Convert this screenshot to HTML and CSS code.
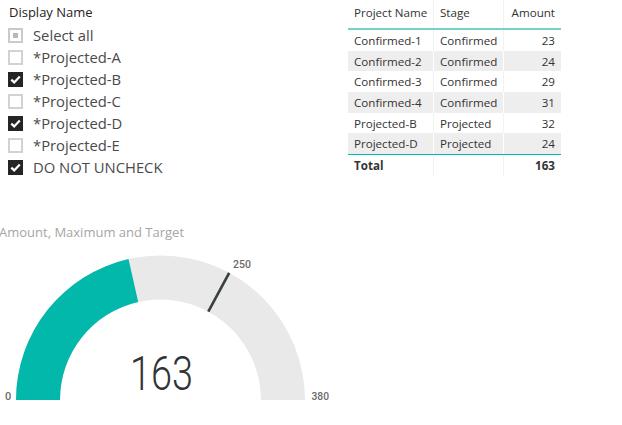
FILE: index.html
```html
<!DOCTYPE html>
<html>
<head>
<meta charset="utf-8">
<link rel="stylesheet" href="styles.css">
</head>
<body>
<div class="page">
  <div class="top">
    <div class="slicer">
      <div class="slicer-title">Display Name</div>
      <div class="item"><span class="box box-partial"><span class="dot"></span></span><span class="label">Select all</span></div>
      <div class="item"><span class="box"></span><span class="label">*Projected-A</span></div>
      <div class="item"><span class="box box-checked"><svg viewBox="0 0 15 15" width="15" height="15"><path d="M3.3 7.6 L6.2 10.4 L11.8 4.4" fill="none" stroke="#fff" stroke-width="2.2"/></svg></span><span class="label">*Projected-B</span></div>
      <div class="item"><span class="box"></span><span class="label">*Projected-C</span></div>
      <div class="item"><span class="box box-checked"><svg viewBox="0 0 15 15" width="15" height="15"><path d="M3.3 7.6 L6.2 10.4 L11.8 4.4" fill="none" stroke="#fff" stroke-width="2.2"/></svg></span><span class="label">*Projected-D</span></div>
      <div class="item"><span class="box"></span><span class="label">*Projected-E</span></div>
      <div class="item"><span class="box box-checked"><svg viewBox="0 0 15 15" width="15" height="15"><path d="M3.3 7.6 L6.2 10.4 L11.8 4.4" fill="none" stroke="#fff" stroke-width="2.2"/></svg></span><span class="label">DO NOT UNCHECK</span></div>
    </div>
    <div class="table">
      <div class="row head">
        <div class="cell c1">Project Name</div><div class="cell c2">Stage</div><div class="cell c3">Amount</div>
      </div>
      <div class="row"><div class="cell c1">Confirmed-1</div><div class="cell c2">Confirmed</div><div class="cell c3">23</div></div>
      <div class="row alt"><div class="cell c1">Confirmed-2</div><div class="cell c2">Confirmed</div><div class="cell c3">24</div></div>
      <div class="row"><div class="cell c1">Confirmed-3</div><div class="cell c2">Confirmed</div><div class="cell c3">29</div></div>
      <div class="row alt"><div class="cell c1">Confirmed-4</div><div class="cell c2">Confirmed</div><div class="cell c3">31</div></div>
      <div class="row"><div class="cell c1">Projected-B</div><div class="cell c2">Projected</div><div class="cell c3">32</div></div>
      <div class="row alt last"><div class="cell c1">Projected-D</div><div class="cell c2">Projected</div><div class="cell c3">24</div></div>
      <div class="row total"><div class="cell c1">Total</div><div class="cell c2"></div><div class="cell c3">163</div></div>
    </div>
  </div>
  <div class="gauge">
    <div class="gauge-title">Amount, Maximum and Target</div>
    <svg class="gauge-svg" width="340" height="185" viewBox="0 240 340 185">
      <path d="M16 400 A144.5 144.5 0 0 1 305 400 L261 400 A100.5 100.5 0 0 0 60 400 Z" fill="#e9e9e9"/>
      <path d="M16 400 A144.5 144.5 0 0 1 128.5 259.1 L138.2 302 A100.5 100.5 0 0 0 60 400 Z" fill="#01b8aa"/>
      <line x1="208.3" y1="311.6" x2="229.2" y2="272.9" stroke="#363f41" stroke-width="2.6"/>
      <text class="g-label" x="233" y="268" textLength="18" lengthAdjust="spacingAndGlyphs">250</text>
      <text class="g-label" x="5" y="400">0</text>
      <text class="g-label" x="311.5" y="400" textLength="17.5" lengthAdjust="spacingAndGlyphs">380</text>
      <text class="g-value" x="130" y="390" textLength="63" lengthAdjust="spacingAndGlyphs">163</text>
    </svg>
  </div>
</div>
</body>
</html>
```

FILE: styles.css
```css
html, body {
  margin: 0;
  padding: 0;
  background: #ffffff;
}

.page {
  width: 622px;
  height: 425px;
  overflow: hidden;
  font-family: "Open Sans", "Noto Sans", sans-serif;
}

.top {
  display: flex;
  height: 224px;
}

.slicer {
  width: 340px;
  padding-left: 8px;
}

.slicer-title {
  height: 24px;
  line-height: 24px;
  font-size: 13px;
  color: #252423;
  padding-left: 1px;
}

.item {
  display: flex;
  align-items: center;
  height: 22px;
  gap: 10px;
}

.box {
  width: 15px;
  height: 15px;
  box-sizing: border-box;
  border: 2px solid #d2d2d2;
  background: #fff;
  display: flex;
  align-items: center;
  justify-content: center;
  flex: none;
}

.box-partial {
  border-color: #cacaca;
}

.dot {
  width: 5px;
  height: 5px;
  background: #b8b8b8;
}

.box-checked {
  border: none;
  background: #252525;
}

.label {
  font-size: 14.8px;
  color: #4a4a4a;
  line-height: 22px;
  white-space: nowrap;
}

.table {
  width: 213px;
  font-size: 11.6px;
  color: #333333;
}

.row {
  display: flex;
  height: 20.67px;
  line-height: 22px;
}

.row.head {
  line-height: 26px;
  border-bottom: 2px solid #74d2c9;
  box-sizing: border-box;
  height: 30px;
}

.row.alt {
  background: #eeeeee;
}

.row.last {
  border-bottom: 1.5px solid #01b8aa;
}

.row.total {
  height: 21px;
  line-height: 21px;
  font-weight: 700;
}

.cell {
  box-sizing: border-box;
  white-space: nowrap;
  overflow: hidden;
}

.c1 {
  width: 86px;
  padding-left: 6px;
  border-right: 1px solid #f2f2f2;
}

.c2 {
  width: 70px;
  padding-left: 6px;
  border-right: 1px solid #f2f2f2;
}

.row.alt .c1, .row.alt .c2 {
  border-right-color: #ffffff;
}

.c3 {
  width: 57px;
  text-align: right;
  padding-right: 6px;
}

.gauge {
  display: flex;
  flex-direction: column;
}

.gauge-title {
  height: 16px;
  line-height: 16px;
  font-size: 13px;
  color: #a6a6a6;
  white-space: nowrap;
  margin-left: -1px;
}

.gauge-svg {
  display: block;
}

.g-label {
  font-family: Roboto, "DejaVu Sans", sans-serif;
  font-size: 11px;
  font-weight: 500;
  fill: #6b6b6b;
}

.g-value {
  font-family: Roboto, "DejaVu Sans", sans-serif;
  font-weight: 300;
  font-size: 49px;
  fill: #333333;
}
```
